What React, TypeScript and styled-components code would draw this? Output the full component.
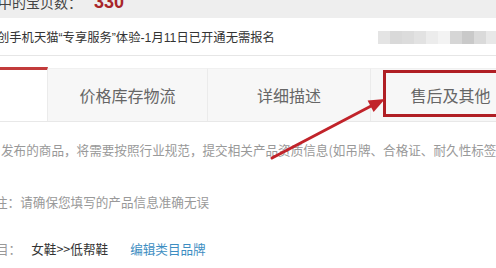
import {FC} from 'react';
import styled, {createGlobalStyle} from 'styled-components';

const GlobalStyle = createGlobalStyle`
  html, body {
    margin: 0;
    padding: 0;
    background: #fff;
  }
  body {
    font-family: "Liberation Sans", "Noto Sans CJK SC", sans-serif;
    overflow: hidden;
  }
`;

const Page = styled.div`
  position: relative;
  width: 496px;
  height: 268px;
  overflow: hidden;
  background: #fff;
`;

const TopBar = styled.div`
  height: 18px;
  background: #eeeeee;
  overflow: hidden;
`;

const CountLine = styled.div`
  display: flex;
  align-items: baseline;
  margin-top: -8px;
  margin-left: -2px;
  white-space: nowrap;
`;

const CountLabel = styled.span`
  font-size: 14px;
  color: #444;
`;

const CountValue = styled.span`
  margin-left: 12px;
  font-size: 18px;
  font-weight: bold;
  color: #a8252a;
`;

const NoticeRow = styled.div`
  display: flex;
  align-items: center;
  justify-content: space-between;
  height: 36px;
  margin-top: 1px;
  border-bottom: 1px solid #e6e6e6;
  overflow: hidden;
`;

const NoticeText = styled.span`
  margin-left: -3px;
  font-size: 12.3px;
  color: #333;
  white-space: nowrap;
`;

const Blur = styled.div`
  display: flex;
  height: 13px;
  margin-right: -2px;
`;

const BlurCell = styled.span<{$shade: string}>`
  width: 12px;
  height: 100%;
  background: ${p => p.$shade};
`;

const TabBar = styled.div`
  display: flex;
  height: 54px;
  margin-top: 11px;
  border-bottom: 1px solid #e8e8e8;
`;

const Tab = styled.div<{$width: number; $active?: boolean}>`
  flex: 0 0 ${p => p.$width}px;
  display: flex;
  align-items: center;
  justify-content: center;
  box-sizing: border-box;
  font-family: "Noto Sans CJK SC", sans-serif;
  font-size: 16px;
  color: #666;
  background: ${p => (p.$active ? '#fff' : '#f7f7f7')};
  border-top: ${p => (p.$active ? '3px solid #c23b3b' : '1px solid #f0f0f0')};
  border-right: 1px solid #ebebeb;
  margin-top: ${p => (p.$active ? '0' : '1px')};
  white-space: nowrap;
`;

const Content = styled.div`
  display: flex;
  flex-direction: column;
  padding-top: 18px;
  font-family: "Noto Sans CJK SC", sans-serif;
  font-size: 12.6px;
  line-height: 20px;
  white-space: nowrap;
`;

const Line = styled.div<{$gap: number; $indent: number}>`
  margin-top: ${p => p.$gap}px;
  text-indent: ${p => p.$indent}px;
  color: #999;
`;

const Value = styled.span`
  color: #333;
  margin-left: 10px;
`;

const Link = styled.span`
  color: #3d8ec2;
  margin-left: 22px;
`;

const Highlight = styled.div`
  position: absolute;
  left: 383px;
  top: 70px;
  width: 120px;
  height: 47px;
  box-sizing: border-box;
  border: 3px solid #b01f25;
`;

const Arrow = styled.svg`
  position: absolute;
  left: 0;
  top: 0;
  pointer-events: none;
`;

const blurShades = ['#e4e4e4', '#d9d9d9', '#dcdcdc', '#e2e2e2', '#ececec', '#f3f3f3', '#d6d6d6', '#c9c9c9', '#dadada', '#e8e8e8'];

const App: FC = () => {
  return (
    <>
      <GlobalStyle />
      <Page>
        <TopBar>
          <CountLine>
            <CountLabel>中的宝贝数：</CountLabel>
            <CountValue>330</CountValue>
          </CountLine>
        </TopBar>

        <NoticeRow>
          <NoticeText>创手机天猫“专享服务”体验-1月11日已开通无需报名</NoticeText>
          <Blur>
            {blurShades.map((shade, i) => (
              <BlurCell key={i} $shade={shade} />
            ))}
          </Blur>
        </NoticeRow>

        <TabBar>
          <Tab $width={48} $active />
          <Tab $width={160}>价格库存物流</Tab>
          <Tab $width={163}>详细描述</Tab>
          <Tab $width={160}>售后及其他</Tab>
        </TabBar>

        <Content>
          <Line $gap={0} $indent={1}>
            发布的商品，将需要按照行业规范，提交相关产品资质信息(如吊牌、合格证、耐久性标签、
          </Line>
          <Line $gap={32} $indent={-5}>
            注：请确保您填写的产品信息准确无误
          </Line>
          <Line $gap={27} $indent={-4}>
            目：
            <Value>女鞋&gt;&gt;低帮鞋</Value>
            <Link>编辑类目品牌</Link>
          </Line>
        </Content>

        <Highlight />
        <Arrow width="496" height="268" viewBox="0 0 496 268">
          <line x1="272" y1="158" x2="373" y2="105" stroke="#c1232a" strokeWidth="3" strokeLinecap="round" />
          <polygon points="385,99 373.6,112 367.6,100.6" fill="#c1232a" />
        </Arrow>
      </Page>
    </>
  );
};

export default App;
